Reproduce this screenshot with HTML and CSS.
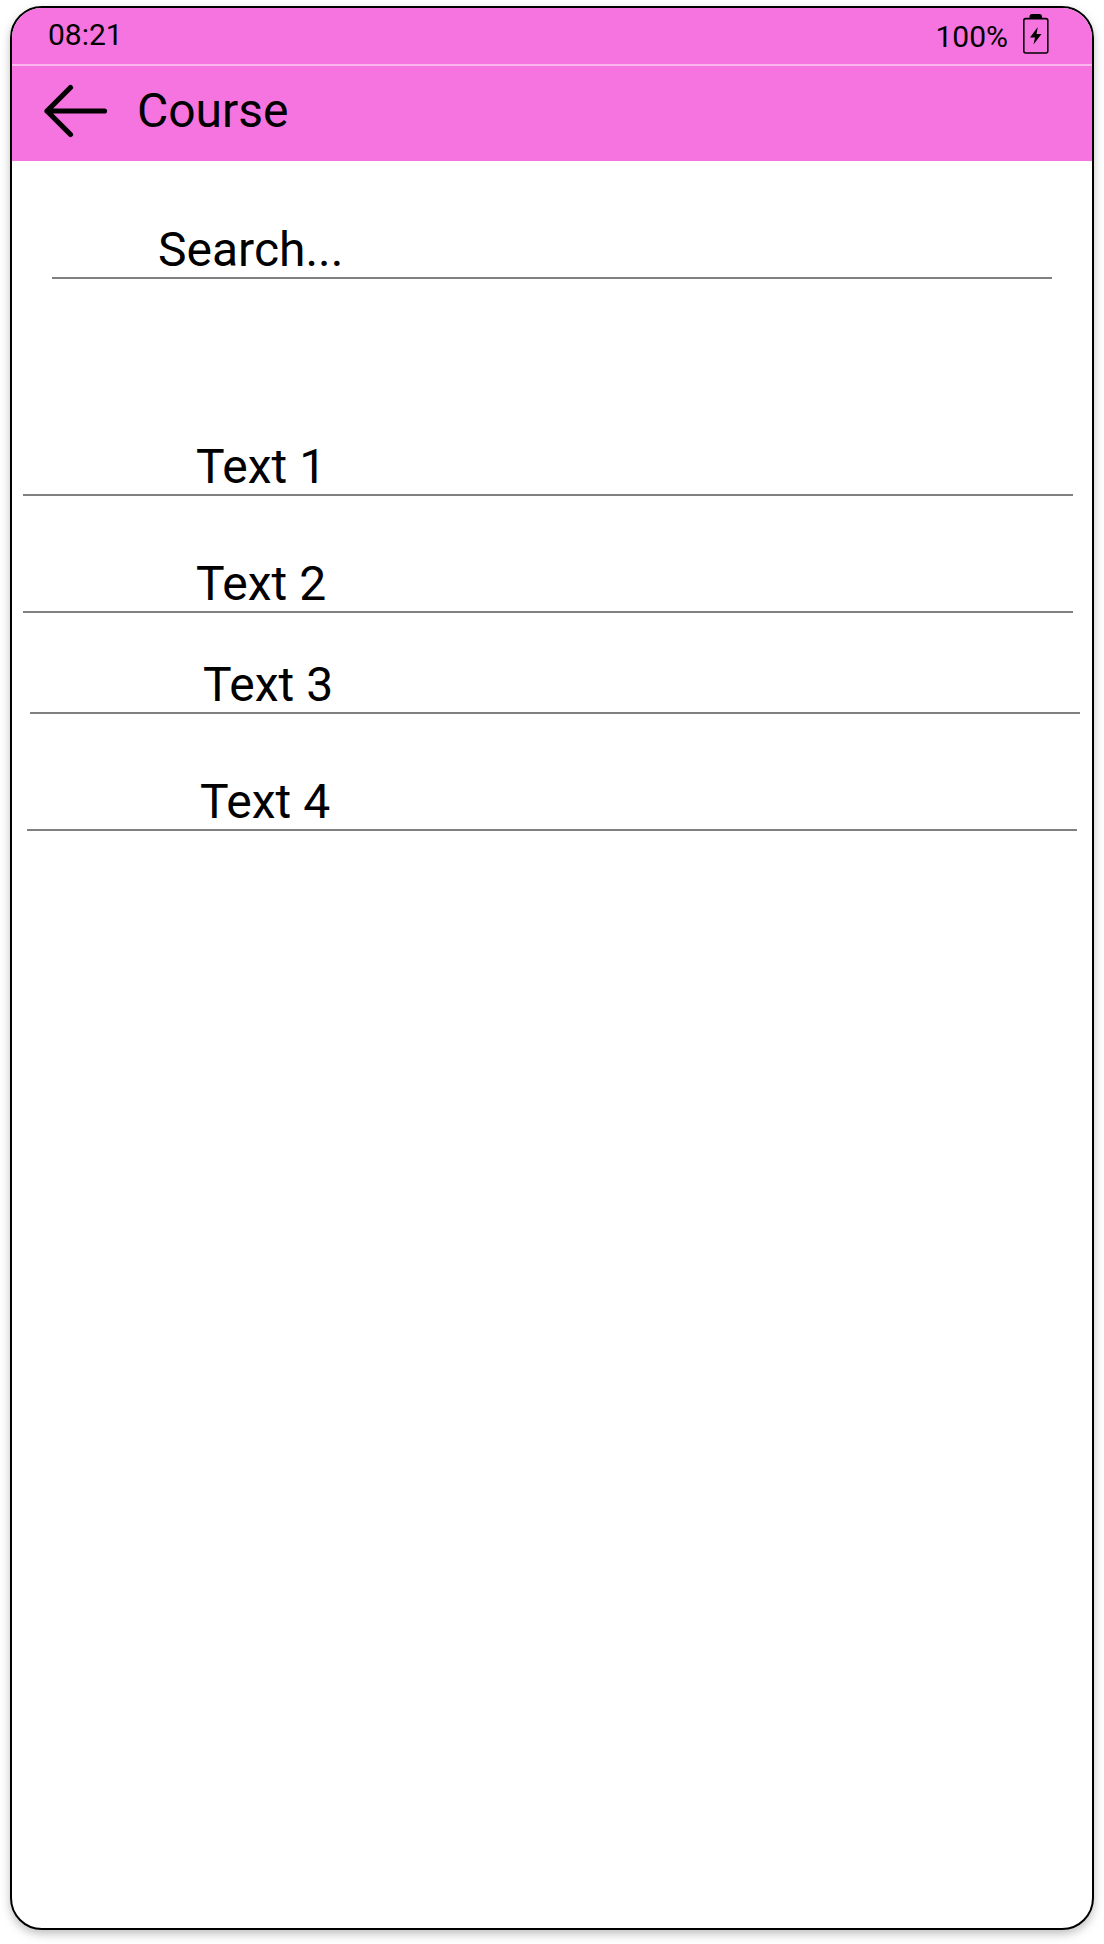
FILE: index.html
```html
<!DOCTYPE html>
<html lang="en">
<head>
<meta charset="utf-8">
<title>Course</title>
<link rel="stylesheet" href="styles.css">
</head>
<body>
<main class="phone">
  <header>
    <div class="status">
      <span class="time">08:21</span>
      <span class="charge">100%</span>
      <svg class="battery" width="26" height="40" viewBox="0 0 26 40" aria-hidden="true">
        <path d="M6.500 4V2.500Q6.500 0 9 0H16.500Q19 0 19 2.500V4Z"/>
        <rect x=".8" y="4.600" width="24" height="34.400" rx="2" fill="none" stroke="#000" stroke-width="1.600"/>
        <path d="M14.800 13L7 23.500H12L10.500 30.500L18.500 20H13.500Z"/>
      </svg>
    </div>
    <div class="titlebar">
      <svg class="back" width="66" height="54" viewBox="0 0 66 54" aria-hidden="true">
        <path d="M27.500 3.500L4 27L27.500 50.500M4 27H61.500" fill="none" stroke="#000" stroke-width="5.200" stroke-linecap="round" stroke-linejoin="round"/>
      </svg>
      <h1>Course</h1>
    </div>
  </header>
  <div class="field search">Search...</div>
  <ul class="list">
    <li class="field">Text 1</li>
    <li class="field">Text 2</li>
    <li class="field third">Text 3</li>
    <li class="field fourth">Text 4</li>
  </ul>
</main>
</body>
</html>
```
FILE: styles.css
```css
* { box-sizing: border-box; }

body {
  margin: 0;
  padding: 6px 10px 14px;
  background: #fff;
  color: #000;
  font-family: Roboto, sans-serif;
}

.phone {
  height: 1924px;
  border: 2px solid #000;
  border-radius: 32px;
  overflow: hidden;
  background: #fff;
  box-shadow: 0 4px 10px rgba(0, 0, 0, 0.25);
}

header { background: #f674e0; }

.status {
  display: flex;
  align-items: flex-start;
  height: 58px;
  padding: 6px 43px 0 36px;
  border-bottom: 2px solid #fab4ee;
  font-size: 30px;
  line-height: 35px;
}

.time { padding-top: 3px; }
.charge { margin-left: auto; padding-top: 5px; }
.battery { margin-left: 15px; }

.titlebar {
  display: flex;
  align-items: flex-start;
  height: 95px;
  padding-left: 31px;
}

.back { margin-top: 18px; }

h1 {
  margin: 17px 0 0 28px;
  font-size: 48px;
  font-weight: 400;
  line-height: 56px;
}

.field {
  width: 1050px;
  height: 58px;
  margin-left: 11px;
  padding-left: 173px;
  border-bottom: 2px solid #808080;
  font-size: 48px;
  line-height: 58px;
}

.search {
  width: 1000px;
  margin: 60px 0 0 40px;
  padding-left: 106px;
}

.list {
  margin: 159px 0 0;
  padding: 0;
  list-style: none;
}

.field + .field { margin-top: 59px; }
.field + .third { margin: 43px 0 0 18px; }
.field + .fourth { margin-left: 15px; }
```
